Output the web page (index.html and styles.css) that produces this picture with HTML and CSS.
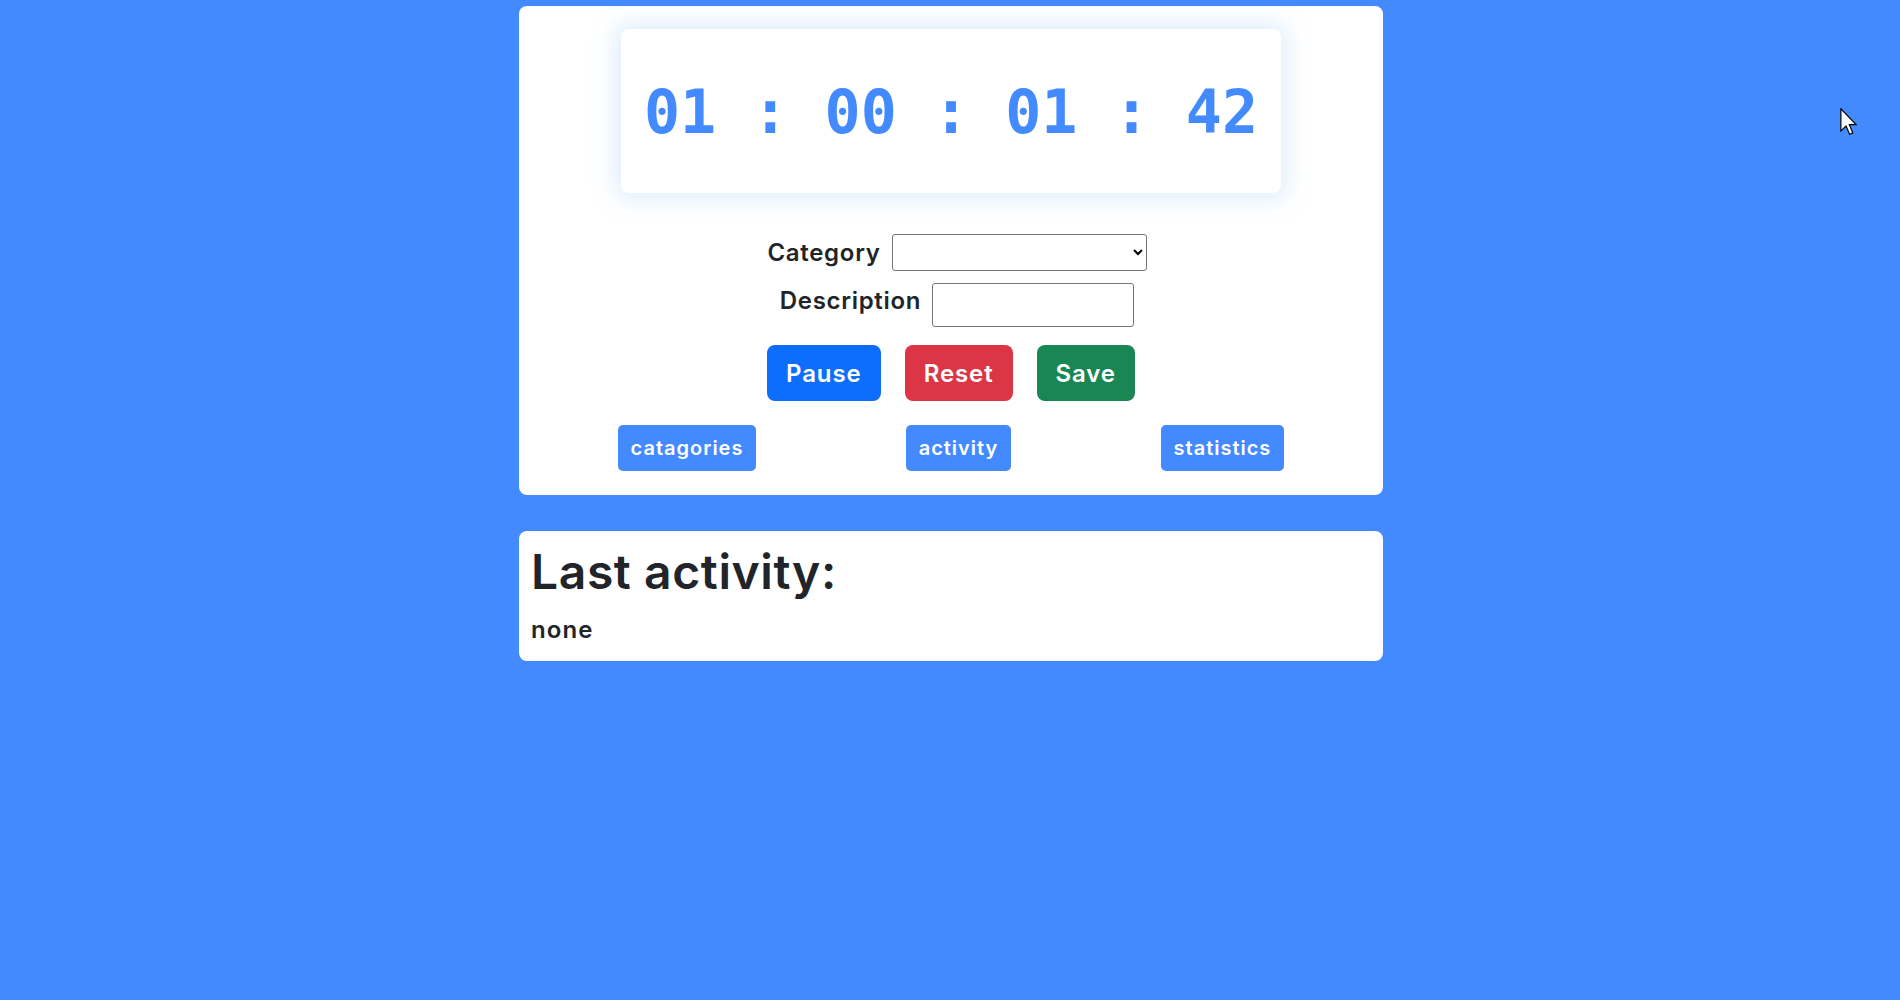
FILE: index.html
```html
<!DOCTYPE html>
<html lang="en">
<head>
<meta charset="utf-8">
<title>Timer</title>
<link rel="stylesheet" href="styles.css">
</head>
<body>
<main class="wrap">
  <section class="card card-main">
    <div class="timer">01 : 00 : 01 : 42</div>
    <div class="form-row row-category">
      <label class="label" for="cat">Category</label>
      <select id="cat" class="select"><option></option></select>
    </div>
    <div class="form-row row-desc">
      <label class="label" for="desc">Description</label>
      <input id="desc" class="input" type="text">
    </div>
    <div class="actions">
      <button class="btn btn-pause">Pause</button>
      <button class="btn btn-reset">Reset</button>
      <button class="btn btn-save">Save</button>
    </div>
    <nav class="nav">
      <a class="nav-btn nav-cat">catagories</a>
      <a class="nav-btn nav-act">activity</a>
      <a class="nav-btn nav-stat">statistics</a>
    </nav>
  </section>
  <section class="card card-last">
    <h1 class="last-title">Last activity:</h1>
    <p class="last-value">none</p>
  </section>
</main>
<svg class="cursor" width="18" height="28" viewBox="0 0 12 19" xmlns="http://www.w3.org/2000/svg">
  <path d="M0.5 0.5 L0.5 15.5 L4 12.2 L6.4 17.8 L8.6 16.9 L6.2 11.3 L10.8 11.3 Z" fill="#fff" stroke="#000" stroke-width="0.8" stroke-linejoin="miter"/>
</svg>
</body>
</html>
```
FILE: styles.css
```css
* { box-sizing: border-box; }

html, body {
  margin: 0;
  padding: 0;
}

body {
  background: #448aff;
  font-family: "Inter", "Liberation Sans", sans-serif;
  color: #212529;
  min-height: 1000px;
  padding-left: 2px;
}

.wrap {
  width: 864px;
  margin: 6px auto 0;
  display: flex;
  flex-direction: column;
  gap: 36px;
}

.card {
  background: #fff;
  border-radius: 8px;
}

.card-main {
  padding: 23px 24px 24px;
  display: flex;
  flex-direction: column;
  align-items: center;
}

.timer {
  width: 660px;
  height: 164px;
  border-radius: 8px;
  background: #fff;
  box-shadow: 0 0 22px 6px rgba(160, 205, 250, 0.35);
  display: flex;
  align-items: center;
  justify-content: center;
  font-family: "DejaVu Sans Mono", "Liberation Mono", monospace;
  font-weight: bold;
  font-size: 60px;
  color: #448aff;
  padding-top: 2px;
}

.form-row {
  display: flex;
  justify-content: center;
  padding-left: 12px;
  gap: 11px;
}

.row-category {
  margin-top: 41px;
  align-items: center;
}

.row-desc {
  margin-top: 12px;
  align-items: flex-start;
}

.label {
  font-size: 24px;
  font-weight: 600;
  line-height: 36px;
  letter-spacing: 0.7px;
}

.select {
  width: 255px;
  height: 37px;
  border: 1px solid #767676;
  border-radius: 3px;
  background: #fff;
  font-size: 20px;
}

.input {
  width: 202px;
  height: 44px;
  border: 1px solid #767676;
  border-radius: 3px;
  background: #fff;
  font-size: 18px;
}

.actions {
  margin-top: 18px;
  display: flex;
  gap: 24px;
}

.btn {
  height: 56px;
  border: 0;
  border-radius: 8px;
  color: #fff;
  font-family: inherit;
  font-size: 24px;
  font-weight: 600;
  letter-spacing: 0.9px;
  padding: 0 19px;
}

.btn-pause { background: #0d6efd; }
.btn-reset { background: #dc3545; }
.btn-save { background: #198754; }

.nav {
  margin-top: 24px;
  align-self: stretch;
  display: flex;
  justify-content: space-around;
}

.nav-btn {
  height: 46px;
  display: flex;
  align-items: center;
  padding: 0 13px;
  background: #448aff;
  color: #fff;
  border-radius: 5px;
  font-size: 20px;
  font-weight: 600;
  letter-spacing: 1px;
}

.card-last {
  padding: 12px 12px 12px;
}

.last-title {
  margin: 0 0 11px;
  font-size: 48px;
  font-weight: 600;
  line-height: 1.2;
  letter-spacing: 0.6px;
}

.last-value {
  margin: 0 0 1px;
  font-size: 24px;
  font-weight: 600;
  line-height: 36px;
  letter-spacing: 1.1px;
}

.cursor {
  position: absolute;
  left: 1840px;
  top: 108px;
}
```
